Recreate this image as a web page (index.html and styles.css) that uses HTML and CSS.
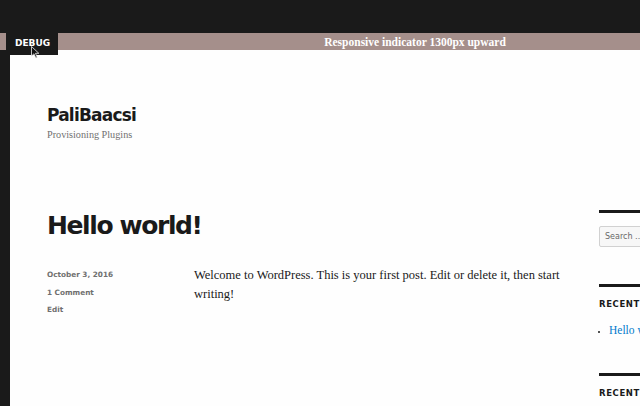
FILE: index.html
```html
<!DOCTYPE html>
<html>
<head>
<meta charset="utf-8">
<link rel="stylesheet" href="styles.css">
</head>
<body>
<div class="topbar"></div>
<div class="indicator">Responsive indicator 1300px upward</div>
<div class="debug">DEBUG</div>
<svg class="cursor" width="9" height="13" viewBox="0 0 9 13"><path d="M0.5 0.5 L0.5 10 L3 7.8 L4.8 12 L6.2 11.4 L4.5 7.3 L7.8 7.3 Z" fill="#111" stroke="#eee" stroke-width="0.8"/></svg>
<div class="frame">
  <div class="strip"></div>
  <div class="page">
    <header class="site-header">
      <div class="site-title">PaliBaacsi</div>
      <div class="site-desc">Provisioning Plugins</div>
    </header>
    <div class="layout">
      <main class="main">
        <h1 class="entry-title">Hello world!</h1>
        <div class="entry">
          <div class="meta">
            <div>October 3, 2016</div>
            <div>1 Comment</div>
            <div>Edit</div>
          </div>
          <div class="content">Welcome to WordPress. This is your first post. Edit or delete it, then start writing!</div>
        </div>
      </main>
      <aside class="sidebar">
        <section class="widget">
          <div class="search">Search …</div>
        </section>
        <section class="widget">
          <h2 class="widget-title">Recent Posts</h2>
          <ul class="list"><li><a href="#">Hello world!</a></li></ul>
        </section>
        <section class="widget">
          <h2 class="widget-title">Recent Comments</h2>
        </section>
      </aside>
    </div>
  </div>
</div>
</body>
</html>
```
FILE: styles.css
```css
html, body {
  margin: 0;
  padding: 0;
  background: #1a1a1a;
  height: 406px;
  overflow: hidden;
}
.topbar {
  height: 33px;
  background: #1a1a1a;
}
.indicator {
  height: 17px;
  background: #a58f8b;
  color: #fff;
  font-family: "Liberation Serif", serif;
  font-weight: bold;
  font-size: 11.5px;
  line-height: 18px;
  text-align: center;
  padding-left: 190px;
}
.debug {
  position: absolute;
  left: 6px;
  top: 33px;
  width: 52px;
  height: 22px;
  background: #1a1a1a;
  color: #fff;
  font-family: "DejaVu Sans", sans-serif;
  font-weight: bold;
  font-size: 9px;
  line-height: 20px;
  box-sizing: border-box;
  padding-left: 9px;
  z-index: 2;
}
.cursor {
  position: absolute;
  left: 31px;
  top: 46px;
  z-index: 3;
}
.frame {
  display: flex;
  height: 356px;
}
.strip {
  width: 10px;
  background: #1a1a1a;
  flex: none;
}
.page {
  flex: 1;
  background: #fefefe;
  overflow: hidden;
  padding-left: 37px;
}
.site-header {
  padding-top: 54px;
  height: 120px;
  box-sizing: border-box;
}
.site-title {
  font-family: "DejaVu Sans", sans-serif;
  font-weight: bold;
  font-size: 17px;
  letter-spacing: -0.8px;
  line-height: 22px;
  color: #1a1a1a;
}
.site-desc {
  font-family: "Liberation Serif", serif;
  font-size: 10.2px;
  line-height: 14px;
  margin-top: 2px;
  color: #707070;
}
.layout {
  display: flex;
}
.main {
  width: 552px;
  flex: none;
}
.entry-title {
  margin: 0;
  font-family: "DejaVu Sans", sans-serif;
  font-weight: bold;
  font-size: 25px;
  letter-spacing: -1.4px;
  line-height: 34px;
  color: #1a1a1a;
  padding-top: 39px;
}
.entry {
  display: flex;
  margin-top: 23px;
}
.meta {
  width: 147px;
  flex: none;
  font-family: "DejaVu Sans", sans-serif;
  font-weight: bold;
  font-size: 7.3px;
  line-height: 17.5px;
  color: #707070;
}
.content {
  width: 372px;
  font-family: "Liberation Serif", serif;
  font-size: 12.5px;
  line-height: 19px;
  color: #1a1a1a;
}
.sidebar {
  width: 100px;
  flex: none;
  padding-top: 40px;
}
.widget {
  border-top: 3px solid #1a1a1a;
  padding-top: 13px;
  margin-bottom: 37px;
}
.widget + .widget {
  padding-top: 11px;
}
.widget:nth-child(2) {
  margin-bottom: 36px;
}
.search {
  height: 21px;
  border: 1px solid #d1d1d1;
  border-radius: 2px;
  background: #f7f7f7;
  box-sizing: border-box;
  font-family: "DejaVu Sans", sans-serif;
  font-size: 8px;
  line-height: 19px;
  padding-left: 5px;
  color: #686868;
  white-space: nowrap;
}
.widget-title {
  margin: 0;
  font-family: "DejaVu Sans", sans-serif;
  font-weight: bold;
  font-size: 8.5px;
  letter-spacing: 0.6px;
  text-transform: uppercase;
  line-height: 12px;
  color: #1a1a1a;
  white-space: nowrap;
}
.list {
  margin: 13px 0 0;
  padding-left: 10px;
  font-family: "Liberation Serif", serif;
  font-size: 11.5px;
  line-height: 14px;
  white-space: nowrap;
}
.list li::marker {
  color: #1a1a1a;
  font-size: 8px;
}
.list a {
  color: #007acc;
  text-decoration: none;
}
```
